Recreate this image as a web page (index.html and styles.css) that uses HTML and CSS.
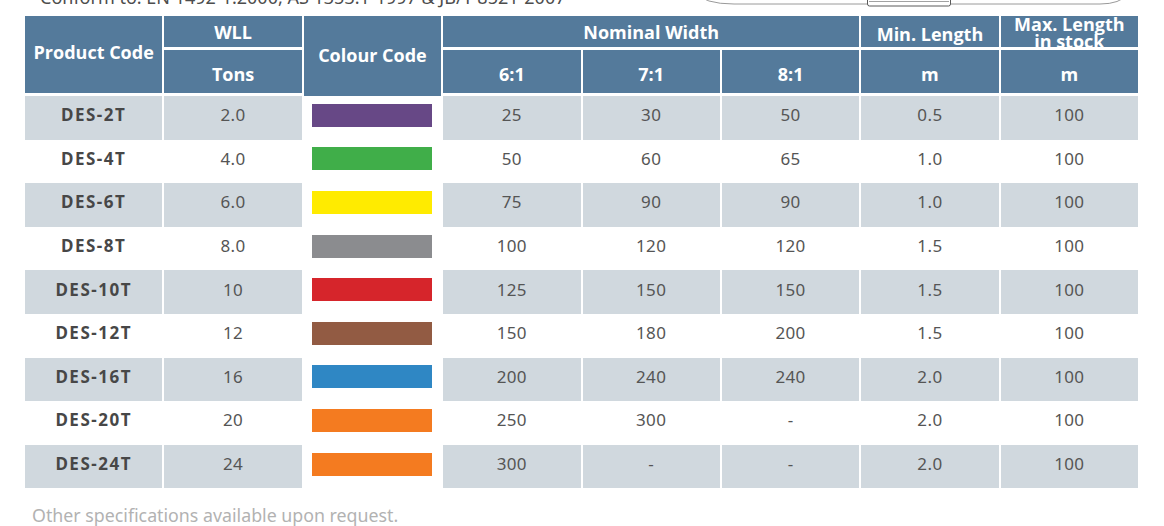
FILE: index.html
```html
<!DOCTYPE html>
<html lang="en">
<head>
<meta charset="utf-8">
<title>Specifications</title>
<link rel="stylesheet" href="styles.css">
</head>
<body>
<div class="page">
  <div class="topbar">
    <p class="conform">Conform to: EN 1492-1:2000, AS 1353.1-1997 &amp; JB/T 8521-2007</p>
    <svg class="tabline" width="470" height="10" viewBox="0 0 470 10">
      <path d="M14,-8 Q24,4 54,4 L420,4 Q440,4 448,-6" fill="none" stroke="#9a9a9a" stroke-width="1"/>
      <rect x="187.5" y="-3" width="83" height="9" rx="2" fill="#ffffff" stroke="#5a5a5a" stroke-width="1"/>
      <line x1="189" y1="1.5" x2="269" y2="1.5" stroke="#8a8a8a" stroke-width="0.8"/>
    </svg>
  </div>

  <div class="spec">
    <div class="head">
      <div class="hc h-code">Product Code</div>
      <div class="hc h-wll">WLL</div>
      <div class="hc h-colour">Colour Code</div>
      <div class="hc h-nominal">Nominal Width</div>
      <div class="hc h-min">Min. Length</div>
      <div class="hc h-max">Max. Length<br>in stock</div>
      <div class="hc h-sub h-tons">Tons</div>
      <div class="hc h-sub h-r6">6:1</div>
      <div class="hc h-sub h-r7">7:1</div>
      <div class="hc h-sub h-r8">8:1</div>
      <div class="hc h-sub h-m1">m</div>
      <div class="hc h-sub h-m2">m</div>
    </div>

    <div class="body">
      <div class="row shade">
        <div class="c code">DES-2T</div><div class="c">2.0</div><div class="c sw"><span class="swatch purple"></span></div>
        <div class="c">25</div><div class="c">30</div><div class="c">50</div><div class="c">0.5</div><div class="c">100</div>
      </div>
      <div class="row">
        <div class="c code">DES-4T</div><div class="c">4.0</div><div class="c sw"><span class="swatch green"></span></div>
        <div class="c">50</div><div class="c">60</div><div class="c">65</div><div class="c">1.0</div><div class="c">100</div>
      </div>
      <div class="row shade">
        <div class="c code">DES-6T</div><div class="c">6.0</div><div class="c sw"><span class="swatch yellow"></span></div>
        <div class="c">75</div><div class="c">90</div><div class="c">90</div><div class="c">1.0</div><div class="c">100</div>
      </div>
      <div class="row">
        <div class="c code">DES-8T</div><div class="c">8.0</div><div class="c sw"><span class="swatch grey"></span></div>
        <div class="c">100</div><div class="c">120</div><div class="c">120</div><div class="c">1.5</div><div class="c">100</div>
      </div>
      <div class="row shade">
        <div class="c code">DES-10T</div><div class="c">10</div><div class="c sw"><span class="swatch red"></span></div>
        <div class="c">125</div><div class="c">150</div><div class="c">150</div><div class="c">1.5</div><div class="c">100</div>
      </div>
      <div class="row">
        <div class="c code">DES-12T</div><div class="c">12</div><div class="c sw"><span class="swatch brown"></span></div>
        <div class="c">150</div><div class="c">180</div><div class="c">200</div><div class="c">1.5</div><div class="c">100</div>
      </div>
      <div class="row shade">
        <div class="c code">DES-16T</div><div class="c">16</div><div class="c sw"><span class="swatch blue"></span></div>
        <div class="c">200</div><div class="c">240</div><div class="c">240</div><div class="c">2.0</div><div class="c">100</div>
      </div>
      <div class="row">
        <div class="c code">DES-20T</div><div class="c">20</div><div class="c sw"><span class="swatch orange"></span></div>
        <div class="c">250</div><div class="c">300</div><div class="c">-</div><div class="c">2.0</div><div class="c">100</div>
      </div>
      <div class="row shade">
        <div class="c code">DES-24T</div><div class="c">24</div><div class="c sw"><span class="swatch orange"></span></div>
        <div class="c">300</div><div class="c">-</div><div class="c">-</div><div class="c">2.0</div><div class="c">100</div>
      </div>
    </div>
  </div>

  <p class="note">Other specifications available upon request.</p>
</div>
</body>
</html>
```

FILE: styles.css
```css
* { box-sizing: border-box; }

html, body {
  margin: 0;
  padding: 0;
  background: #ffffff;
}

body {
  font-family: "Noto Sans", "Open Sans", sans-serif;
  overflow: hidden;
}

.page {
  width: 1164px;
  height: 526px;
}

.topbar {
  position: relative;
  display: flow-root;
  height: 16px;
}

.conform {
  margin: -15px 0 0 40px;
  font-size: 18px;
  line-height: 24px;
  color: #4d4d4d;
  white-space: nowrap;
}

.tabline {
  position: absolute;
  left: 680px;
  top: 0;
}

.spec {
  width: 1113px;
  margin-left: 25px;
}

.head {
  display: grid;
  grid-template-columns: repeat(8, 1fr);
  grid-template-rows: 31px 43px;
  column-gap: 2px;
  row-gap: 3px;
  margin-bottom: 3px;
}

.hc {
  background: #547a9b;
  color: #ffffff;
  font-family: "Open Sans", "Noto Sans", sans-serif;
  font-weight: 700;
  font-size: 18px;
  line-height: 22px;
  display: flex;
  align-items: center;
  justify-content: center;
  text-align: center;
  overflow: hidden;
}

.h-code { grid-column: 1; grid-row: 1 / 3; padding-bottom: 5px; }
.h-wll { grid-column: 2; grid-row: 1; }
.h-colour { grid-column: 3; grid-row: 1 / 3; margin-bottom: -4px; padding-bottom: 4px; }
.h-nominal { grid-column: 4 / 7; grid-row: 1; }
.h-min { grid-column: 7; grid-row: 1; padding-top: 5px; }
.h-max {
  grid-column: 8;
  grid-row: 1;
  line-height: 17px;
  align-items: flex-start;
}
.h-sub { grid-row: 2; padding-top: 4px; }
.h-tons { grid-column: 2; }
.h-r6 { grid-column: 4; }
.h-r7 { grid-column: 5; }
.h-r8 { grid-column: 6; }
.h-m1 { grid-column: 7; }
.h-m2 { grid-column: 8; }

.row {
  display: grid;
  grid-template-columns: repeat(8, 1fr);
  column-gap: 2px;
  height: 43.6px;
}

.c {
  display: flex;
  align-items: center;
  justify-content: center;
  padding-bottom: 6px;
  font-size: 17px;
  color: #555555;
  letter-spacing: 0.4px;
}

.row.shade .c { background: #d0d8de; }
.row.shade .c.sw { background: #ffffff; }

.code {
  font-weight: 700;
  color: #474747;
  letter-spacing: 1.5px;
}

.sw { padding-bottom: 5px; }

.swatch {
  display: block;
  width: 120px;
  height: 23px;
}

.purple { background: #674886; }
.green { background: #40ae49; }
.yellow { background: #ffeb00; }
.grey { background: #8b8c8f; }
.red { background: #d6252b; }
.brown { background: #925b43; }
.blue { background: #2f87c4; }
.orange { background: #f47b20; }

.note {
  margin: 15px 0 0 32px;
  font-size: 17.8px;
  line-height: 24px;
  color: #b2b2b2;
  white-space: nowrap;
}
```
